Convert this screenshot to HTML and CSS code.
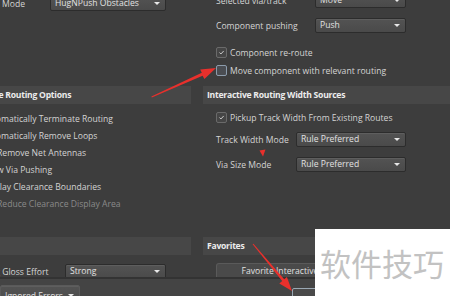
FILE: index.html
```html
<!DOCTYPE html>
<html>
<head>
<meta charset="utf-8">
<link rel="stylesheet" href="styles.css">
</head>
<body>
<div class="page">
  <div class="band band-top">
    <div class="col col-left">
      <div class="field mode">
        <span class="label">Mode</span>
        <div class="select w-mode">HugNPush Obstacles</div>
      </div>
    </div>
    <div class="col col-right">
      <div class="field row-move">
        <span class="label w99">Selected via/track</span>
        <div class="select w-top">Move</div>
      </div>
      <div class="field row-push">
        <span class="label w99">Component pushing</span>
        <div class="select w-top">Push</div>
      </div>
      <div class="check row-reroute"><span class="box on"><svg viewBox="0 0 11 11"><path d="M3 5.5 L4.8 7.3 L8.2 3.6" fill="none" stroke="#d8d8d8" stroke-width="1.1"/></svg></span><span>Component re-route</span></div>
      <div class="check row-move-comp"><span class="box hover"></span><span>Move component with relevant routing</span></div>
    </div>
  </div>

  <div class="band band-mid">
    <div class="col col-left">
      <div class="header"><span class="htext left-h">Interactive Routing Options</span></div>
      <ul class="opts">
        <li class="opt">Automatically Terminate Routing</li>
        <li class="opt">Automatically Remove Loops</li>
        <li class="opt sub">Remove Net Antennas</li>
        <li class="opt">Allow Via Pushing</li>
        <li class="opt">Display Clearance Boundaries</li>
        <li class="opt sub dim">Reduce Clearance Display Area</li>
      </ul>
    </div>
    <div class="col col-right">
      <div class="header"><span class="htext">Interactive Routing Width Sources</span></div>
      <div class="check row-pickup"><span class="box on"><svg viewBox="0 0 11 11"><path d="M3 5.5 L4.8 7.3 L8.2 3.6" fill="none" stroke="#d8d8d8" stroke-width="1.1"/></svg></span><span>Pickup Track Width From Existing Routes</span></div>
      <div class="field row-track">
        <span class="label w80">Track Width Mode</span>
        <div class="select w-rule">Rule Preferred</div>
      </div>
      <div class="field row-via">
        <span class="label w80">Via Size Mode</span>
        <div class="select w-rule">Rule Preferred</div>
      </div>
    </div>
  </div>

  <div class="band band-bot">
    <div class="col col-left">
      <div class="header"></div>
      <div class="field row-gloss">
        <span class="label gloss-label">Routing Gloss Effort</span>
        <div class="select w-gloss">Strong</div>
      </div>
    </div>
    <div class="col col-right">
      <div class="header"><span class="htext">Favorites</span></div>
      <div class="tab">Favorite Interactive Routings</div>
    </div>
  </div>

  <div class="footer">
    <div class="select w-foot">Ignored Errors</div>
    <div class="btn"></div>
  </div>
</div>

<div class="watermark">软件技巧</div>

<svg class="marks" width="450" height="296" viewBox="0 0 450 296">
  <polygon fill="#e8302c" points="151.8,97.6 202.6,75.7 204.4,78.9 216,68 200.2,69.6 201.8,72.7 151.4,96.6"/>
  <polygon fill="#e8302c" points="252.6,244.3 282.2,281.1 279.3,283.5 292,291 286.9,277 284.2,279.3 253.4,243.7"/>
  <polygon fill="#e8302c" points="259.5,150.5 265.5,149.5 263,156.5"/>
</svg>
</body>
</html>
```

FILE: styles.css
```css
* { box-sizing: border-box; }
html, body { margin: 0; padding: 0; }
body {
  width: 450px;
  height: 296px;
  overflow: hidden;
  position: relative;
  background: #3d3d3d;
  font-family: "Open Sans", "Noto Sans", sans-serif;
  font-size: 8.6px;
  color: #d4d4d4;
}
.page { display: flex; flex-direction: column; height: 296px; }

.band {
  display: grid;
  grid-template-columns: 191px 247px;
  column-gap: 12px;
}
.col { overflow: hidden; display: flex; flex-direction: column; }

.band-top { height: 93px; margin-top: -7px; flex: none; }
.band-mid { height: 151px; flex: none; }
.band-bot { height: 40px; flex: none; }

/* fields */
.field { display: flex; align-items: center; }
.label { white-space: nowrap; }
.w99 { width: 99px; flex: none; }
.w80 { width: 80px; flex: none; }

.select {
  position: relative;
  height: 15px;
  line-height: 13px;
  padding-left: 4px;
  border: 1px solid #2c2c2c;
  border-radius: 2px;
  background: linear-gradient(#535353, #4a4a4a);
  color: #e2e2e2;
  white-space: nowrap;
  flex: none;
  box-shadow: inset 0 1px 0 #5e5e5e;
}
.select::after {
  content: "";
  position: absolute;
  right: 5px;
  top: 5px;
  border-left: 3px solid transparent;
  border-right: 3px solid transparent;
  border-top: 3px solid #e8e8e8;
}
.w-mode { width: 116px; }
.w-top { width: 91px; }
.w-rule { width: 110px; }
.w-gloss { width: 101px; }
.w-foot { width: 80px; }

.mode { margin-top: 3px; padding-left: 2px; }
.mode .label { width: 48px; flex: none; }

.col-right { padding-left: 13px; }
.row-push { margin-top: 10px; }

.check { display: flex; align-items: center; white-space: nowrap; height: 11px; }
.box {
  width: 11px; height: 11px; flex: none;
  border: 1px solid #6a6a6a;
  border-radius: 2px;
  background: #454545;
  margin-right: 3px;
  display: block;
}
.box svg { display: block; width: 9px; height: 9px; }
.box.hover { border-color: #8c9cac; background: #4a4d52; }
.row-reroute { margin-top: 14px; }
.row-move-comp { margin-top: 7px; }

/* headers */
.header {
  height: 18px;
  background: #474747;
  display: flex;
  align-items: center;
  flex: none;
}
.col-right .header { margin-left: -13px; padding-left: 4px; }
.htext { font-weight: bold; color: #ececec; white-space: nowrap; letter-spacing: -0.25px; }
.left-h { margin-left: -41px; }

/* left options */
.opts { list-style: none; margin: 7px 0 0 0; padding: 0; }
.opt { height: 17px; line-height: 17px; white-space: nowrap; margin-left: -18px; }
.opt.sub { margin-left: -3px; }
.opt.dim { color: #8a8a8a; }

.row-pickup { margin-top: 8px; }
.row-track { margin-top: 9px; }
.row-via { margin-top: 10px; }

/* bottom */
.row-gloss { margin-top: 9px; }
.gloss-label { width: 96px; flex: none; margin-left: -31px; }
.tab {
  margin-top: 8px;
  height: 18px;
  width: 165px;
  background: #4a4a4a;
  border: 1px solid #5a5a5a;
  border-bottom: none;
  border-radius: 3px 3px 0 0;
  text-align: center;
  line-height: 15px;
  color: #e0e0e0;
  white-space: nowrap;
}

.footer {
  flex: 1;
  border-top: 2px solid #333333;
  background: #444444;
  display: flex;
  align-items: flex-start;
  padding-top: 6px;
}
.footer .w-foot { border-color: #5a5a5a; height: 22px; line-height: 20px; }
.footer .w-foot::after { top: 8px; }
.btn {
  margin-left: 212px;
  margin-top: 3px;
  width: 60px;
  height: 14px;
  border: 1px solid #9aa8b4;
  border-radius: 2px;
  background: #4a4a4a;
}

.watermark {
  position: absolute;
  left: 315px;
  top: 229px;
  width: 135px;
  height: 67px;
  background: #ffffff;
  color: #c2c2c2;
  font-family: "Noto Sans CJK SC", sans-serif;
  font-size: 31px;
  line-height: 67px;
  padding-left: 5px;
  white-space: nowrap;
}

.marks { position: absolute; left: 0; top: 0; pointer-events: none; }
```
